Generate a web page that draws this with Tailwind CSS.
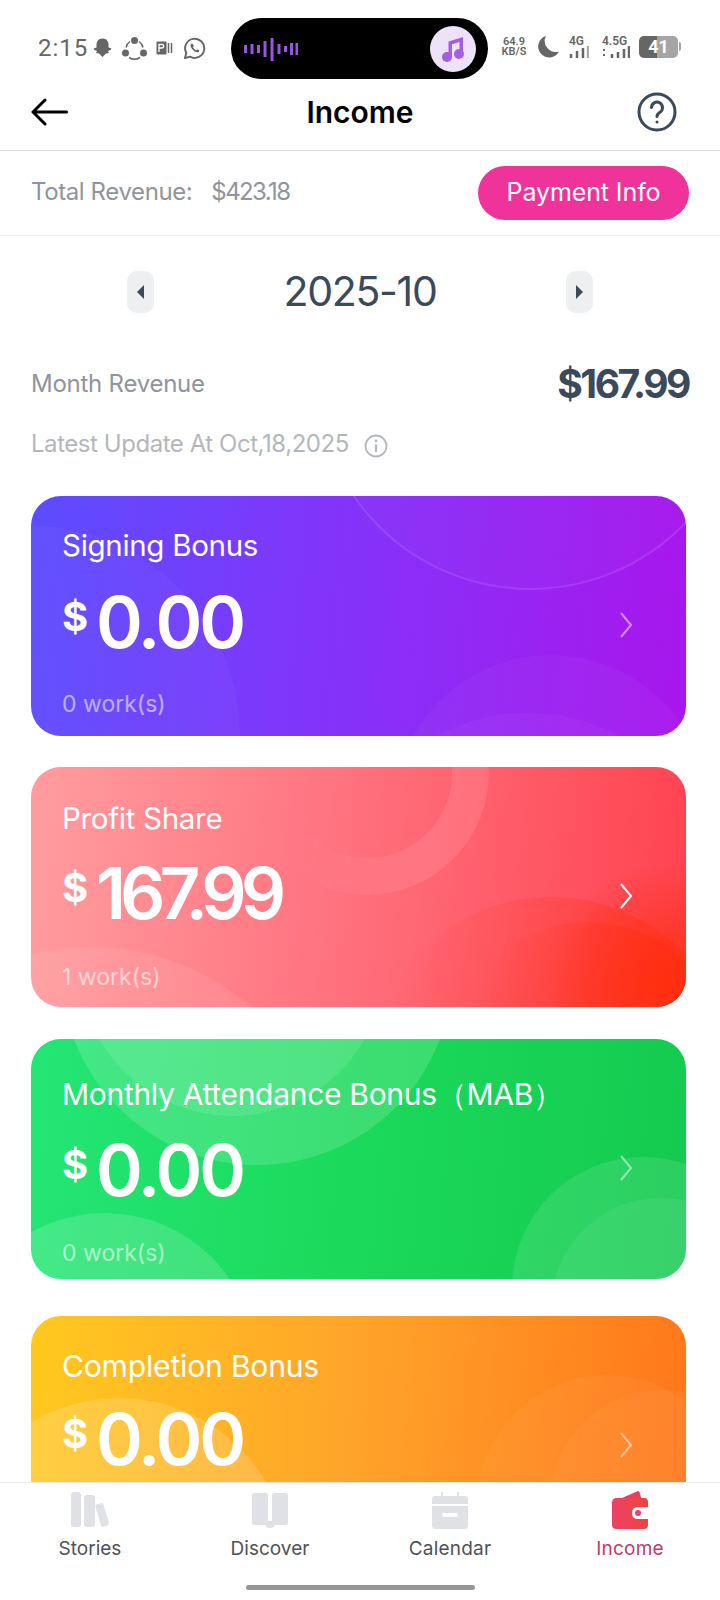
<!DOCTYPE html>
<html lang="en">
  <head>
    <meta charset="UTF-8" />
    <meta name="viewport" content="width=device-width, initial-scale=1.0" />
    <title>Income</title>
    <script src="https://cdn.jsdelivr.net/npm/@tailwindcss/browser@4"></script>
  </head>
  <body class="bg-white font-['Inter',sans-serif]">
    <div class="flex flex-col w-[720px] h-[1600px] overflow-hidden bg-white">
      <!-- status bar -->
      <div class="flex items-center h-[85px] shrink-0 pt-[11px] pl-[38px]">
        <span class="w-[52px] text-[24px] tracking-[1px] text-[#666] font-['Roboto',sans-serif]">2:15</span>
        <div class="flex items-center w-[141px] gap-[5px]">
          <svg width="25" height="23" viewBox="0 0 25 22" fill="#666"><path d="M12.500 1c4 0 6 3 6 6v3l3 1-1 1.500-2.500 1 1 2-3 .5-3.500 3.500-3.500-3.500-3-.5 1-2-2.500-1L3.500 11l3-1V7c0-3 2-6 6-6z"/></svg>
          <svg width="25" height="25" viewBox="0 0 25 25" fill="none" class="ml-[2px]"><path d="M8 5.500a9.500 9.500 0 0 0-4 6M17 5.500a9.500 9.500 0 0 1 4 6M7 21.500a10 10 0 0 0 11 0" stroke="#666" stroke-width="1.500"/><circle cx="12.500" cy="4.500" r="3.500" fill="#666"/><circle cx="3.500" cy="17" r="3.500" fill="#666"/><circle cx="21.500" cy="17" r="3.500" fill="#666"/></svg>
          <svg width="17" height="14" viewBox="0 0 17 14" fill="none" class="ml-[4px]"><rect x="0.500" y="0.500" width="10" height="13" rx="1" fill="#666"/><path d="M3 11V3.500h3a1.700 1.700 0 0 1 0 3.500H3" stroke="#fff" stroke-width="1.300"/><path d="M12.500 2v10M15.500 2v10" stroke="#666" stroke-width="1.500"/></svg>
          <svg width="23" height="23" viewBox="0 0 24 24" fill="none" class="ml-[5px]"><path d="M2 22l1.500-5.300A10 10 0 1 1 7.300 20.500z" stroke="#666" stroke-width="2" stroke-linejoin="round"/><path d="M8.500 7c-1 1-1 3 .8 5.300 1.800 2.400 4 3.700 5.700 3.700 1 0 2-.8 2-2l-2.300-1.200-1 1c-1.300-.5-2.700-1.800-3.300-3.300l1-1L10 7z" fill="#666"/></svg>
        </div>
        <div class="flex items-center justify-between w-[257px] h-[61px] mt-[1px] rounded-full bg-black pl-[13px] pr-[12px]">
          <svg width="54" height="24" viewBox="0 0 54 24" fill="none" stroke="#9a55e0" stroke-width="3"><path d="M1.500 8v8M8 7v10M14.500 8v8M21 4v16M28 1v23M35 7v10M41.500 9v6M47.500 6v12M53 6v12"/></svg>
          <div class="flex items-center justify-center w-[46px] h-[46px] rounded-full bg-[#eee2fa]">
            <svg width="24" height="26" viewBox="0 0 24 26" fill="#a45ee0"><path d="M7.500 5.500L22 1v17h-3.500V6l-7.500 2.300V21H7.500z"/><circle cx="6" cy="21" r="5"/><circle cx="18" cy="18" r="5"/></svg>
          </div>
        </div>
        <div class="flex flex-col items-center ml-[13px] w-[26px] -mt-[3px] text-[11px] leading-[10px] font-semibold text-[#666] font-['Roboto',sans-serif]"><span>64.9</span><span>KB/S</span></div>
        <svg width="22" height="23" viewBox="0 0 22 23" fill="#666" class="ml-[10px] -mt-[3px]"><path d="M9 1a11 11 0 0 0 13 15.500A11 11 0 1 1 9 1z"/></svg>
        <div class="flex flex-col ml-[10px] w-[22px] -mt-[3px] text-[12px] leading-[10px] font-semibold text-[#666] font-['Roboto',sans-serif]">
          <span>4G</span>
          <svg width="20" height="12" viewBox="0 0 20 12" fill="none" stroke="#666" stroke-width="2.500"><path d="M2 12V8M8 12V5M14 12V2"/><path d="M19 12V0" stroke="#aaa"/></svg>
        </div>
        <div class="flex flex-col ml-[11px] w-[29px] -mt-[3px] text-[12px] leading-[10px] font-semibold text-[#666] font-['Roboto',sans-serif]">
          <span>4.5G</span>
          <svg width="28" height="12" viewBox="0 0 28 12" fill="none" stroke="#666" stroke-width="2.500"><path d="M2 3v2M2 8v2" stroke-width="2"/><path d="M10 12V8M16 12V6M22 12V3M27 12V0"/></svg>
        </div>
        <div class="flex items-center ml-[8px] -mt-[3px]">
          <div class="flex items-center justify-center w-[39px] h-[22px] rounded-[5px] bg-[linear-gradient(90deg,#666_0%,#666_45%,#a5a5a5_45%,#a5a5a5_100%)] text-[18px] font-bold text-white font-['Roboto',sans-serif]">41</div>
          <div class="w-[2px] h-[9px] ml-[1px] rounded-r-full bg-[#a5a5a5]"></div>
        </div>
      </div>

      <!-- header -->
      <div class="grid grid-cols-[1fr_auto_1fr] items-center h-[66px] shrink-0 border-b border-[#d9dbde] pb-[11px] px-[31px]">
        <svg width="37" height="28" viewBox="0 0 37 28" fill="none" stroke="#000" stroke-width="3" stroke-linecap="round" stroke-linejoin="round"><path d="M35.500 14H2M14 2L2 14l12 12"/></svg>
        <h1 class="text-[30px] font-semibold text-black">Income</h1>
        <svg width="40" height="40" viewBox="0 0 40 40" fill="none" stroke="#3b4a5a" stroke-width="3" stroke-linecap="round" class="justify-self-end mr-[12px]"><circle cx="20" cy="20" r="18"/><path d="M14.500 15.500a5.500 5.500 0 1 1 8.500 4.700c-2 1.300-3 2.200-3 4.300"/><circle cx="20" cy="30" r="1.500" fill="#3b4a5a" stroke="none"/></svg>
      </div>

      <!-- total revenue -->
      <div class="flex items-center justify-between h-[85px] shrink-0 border-b border-[#ececee] pl-[31px] pr-[31px]">
        <div class="flex items-center text-[24px] text-[#8f959d] tracking-[-0.4px] -mt-[2px]">
          <span>Total Revenue:</span>
          <span class="ml-[19px] tracking-[-1.6px]">$423.18</span>
        </div>
        <button class="w-[211px] h-[54px] rounded-full bg-[#f0339a] text-[25px] text-white tracking-[-0.1px]">Payment Info</button>
      </div>

      <div class="flex-1 overflow-hidden">
        <!-- month switcher -->
        <div class="flex items-center justify-between h-[112px] pl-[127px] pr-[127px]">
          <div class="flex items-center justify-center w-[27px] h-[42px] rounded-[10px] bg-[#eeeff1]">
            <div class="w-0 h-0 border-y-[7px] border-y-transparent border-r-[7px] border-r-[#3b4a5a]"></div>
          </div>
          <span class="text-[41px] text-[#3b4a5a] tracking-[-1.3px]">2025-10</span>
          <div class="flex items-center justify-center w-[27px] h-[42px] rounded-[10px] bg-[#eeeff1]">
            <div class="w-0 h-0 border-y-[7px] border-y-transparent border-l-[7px] border-l-[#3b4a5a]"></div>
          </div>
        </div>

        <div class="flex items-center justify-between h-[48px] mt-[12px] px-[31px]">
          <span class="text-[24px] text-[#8f959d] tracking-[-0.25px]">Month Revenue</span>
          <span class="text-[39px] font-bold text-[#3b4a5a] tracking-[-2.4px]">$167.99</span>
        </div>
        <div class="flex items-center h-[36px] mt-[18px] pl-[31px]">
          <span class="text-[24px] text-[#b3b7bc] tracking-[-0.45px]">Latest Update At Oct,18,2025</span>
          <svg width="24" height="24" viewBox="0 0 24 24" fill="none" stroke="#b3b7bc" stroke-width="1.800" class="ml-[15px] mt-[3px]"><circle cx="12" cy="12" r="10.500"/><path d="M12 10.500V18" stroke-width="2.200"/><circle cx="12" cy="7" r="1.400" fill="#b3b7bc" stroke="none"/></svg>
        </div>

        <!-- signing bonus -->
        <div class="relative overflow-hidden w-[655px] h-[240px] mt-[34px] ml-[31px] rounded-[30px] bg-[linear-gradient(95deg,#5b4dff_0%,#7f37fb_40%,#a916ec_100%)]">
          <div class="absolute left-[-211px] top-[30px] w-[420px] h-[420px] rounded-full bg-white/[0.03]"></div>
          <div class="absolute left-[284px] top-[-337px] w-[431px] h-[431px] rounded-full bg-white/[0.02] border-2 border-white/10"></div>
          <div class="absolute left-[362px] top-[159px] w-[316px] h-[316px] rounded-full bg-white/[0.03]"></div>
          <div class="absolute left-[302px] top-[217px] w-[390px] h-[390px] rounded-full bg-white/[0.03]"></div>
          <div class="relative flex flex-col h-full pl-[31px]">
            <span class="mt-[30px] h-[38px] text-[29.5px] leading-[38px] text-white tracking-[-0.3px]">Signing Bonus</span>
            <div class="flex items-center h-[84px] mt-[16px]">
              <span class="text-[40px] font-bold text-white -mt-[10px] w-[34px]">$</span>
              <span class="text-[71px] leading-[84px] font-semibold text-white tracking-[-3px]">0.00</span>
            </div>
            <span class="mt-[25px] text-[23px] leading-[30px] text-white/55">0 work(s)</span>
            <svg width="14" height="26" viewBox="0 0 14 26" fill="none" stroke="#fff" stroke-opacity=".5" stroke-width="2" class="absolute left-[588px] top-[116px]"><path d="M2 1l10 12L2 25"/></svg>
          </div>
        </div>

        <!-- profit share -->
        <div class="relative overflow-hidden w-[655px] h-[240px] mt-[31px] ml-[31px] rounded-[30px] bg-[linear-gradient(95deg,#ff9da0_0%,#ff7480_45%,#ff4250_100%)]">
          <div class="absolute left-[-183px] top-[180px] w-[486px] h-[486px] rounded-full bg-white/[0.08]"></div>
          <div class="absolute left-[214px] top-[-116px] w-[244px] h-[244px] rounded-full border-[37px] border-white/10 [mask-image:linear-gradient(100deg,transparent_30%,black_75%)]"></div>
          <div class="absolute left-[334px] top-[130px] w-[372px] h-[372px] rounded-full bg-[linear-gradient(110deg,transparent_12%,rgba(255,50,30,0.5)_65%)]"></div>
          <div class="absolute left-[417px] top-[155px] w-[280px] h-[280px] rounded-full bg-[linear-gradient(110deg,transparent_15%,rgba(255,45,20,0.55)_70%)]"></div>
          <div class="absolute left-[520px] top-[95px] w-[240px] h-[240px] bg-[radial-gradient(circle_closest-side,rgba(255,45,10,0.85),transparent)]"></div>
          <div class="relative flex flex-col h-full pl-[31px]">
            <span class="mt-[32px] h-[38px] text-[29.5px] leading-[38px] text-white tracking-[-0.3px]">Profit Share</span>
            <div class="flex items-center h-[84px] mt-[14px]">
              <span class="text-[40px] font-bold text-white -mt-[10px] w-[34px]">$</span>
              <span class="text-[71px] leading-[84px] font-semibold text-white tracking-[-6px]">167.99</span>
            </div>
            <span class="mt-[27px] text-[23px] leading-[30px] text-white/55">1 work(s)</span>
            <svg width="14" height="26" viewBox="0 0 14 26" fill="none" stroke="#fff" stroke-width="2" class="absolute left-[588px] top-[116px]"><path d="M2 1l10 12L2 25"/></svg>
          </div>
        </div>

        <!-- monthly attendance bonus -->
        <div class="relative overflow-hidden w-[655px] h-[240px] mt-[32px] ml-[31px] rounded-[30px] bg-[linear-gradient(95deg,#24e676_0%,#1bd95a_50%,#14ca50_100%)]">
          <div class="absolute left-[30px] top-[-266px] w-[392px] h-[392px] rounded-full bg-white/15"></div>
          <div class="absolute left-[48px] top-[-229px] w-[306px] h-[306px] rounded-full bg-white/10"></div>
          <div class="absolute left-[-77px] top-[174px] w-[302px] h-[302px] rounded-full bg-white/15"></div>
          <div class="absolute left-[481px] top-[118px] w-[262px] h-[262px] rounded-full bg-white/10"></div>
          <div class="absolute left-[520px] top-[159px] w-[220px] h-[220px] rounded-full bg-white/[0.06]"></div>
          <div class="relative flex flex-col h-full pl-[31px]">
            <span class="mt-[36px] h-[38px] text-[30px] leading-[38px] text-white tracking-[-0.3px] whitespace-nowrap">Monthly Attendance Bonus（MAB）</span>
            <div class="flex items-center h-[84px] mt-[15px]">
              <span class="text-[40px] font-bold text-white -mt-[10px] w-[34px]">$</span>
              <span class="text-[71px] leading-[84px] font-semibold text-white tracking-[-3px]">0.00</span>
            </div>
            <span class="mt-[26px] text-[23px] leading-[30px] text-white/55">0 work(s)</span>
            <svg width="14" height="26" viewBox="0 0 14 26" fill="none" stroke="#fff" stroke-opacity=".5" stroke-width="2" class="absolute left-[588px] top-[116px]"><path d="M2 1l10 12L2 25"/></svg>
          </div>
        </div>

        <!-- completion bonus -->
        <div class="relative overflow-hidden w-[655px] h-[240px] mt-[37px] ml-[31px] rounded-[30px] bg-[linear-gradient(95deg,#ffc91f_0%,#ffa32a_50%,#ff761a_100%)]">
          <div class="absolute left-[-83px] top-[82px] w-[342px] h-[342px] rounded-full bg-white/15"></div>
          <div class="absolute left-[446px] top-[59px] w-[260px] h-[260px] rounded-full bg-white/[0.04]"></div>
          <div class="absolute left-[520px] top-[74px] w-[220px] h-[220px] rounded-full bg-white/[0.04]"></div>
          <div class="relative flex flex-col h-full pl-[31px]">
            <span class="mt-[31px] h-[38px] text-[30px] leading-[38px] text-white tracking-[-0.15px]">Completion Bonus</span>
            <div class="flex items-center h-[84px] mt-[12px]">
              <span class="text-[40px] font-bold text-white -mt-[10px] w-[34px]">$</span>
              <span class="text-[71px] leading-[84px] font-semibold text-white tracking-[-3px]">0.00</span>
            </div>
            <svg width="14" height="26" viewBox="0 0 14 26" fill="none" stroke="#fff" stroke-opacity=".5" stroke-width="2" class="absolute left-[588px] top-[116px]"><path d="M2 1l10 12L2 25"/></svg>
          </div>
        </div>
      </div>

      <!-- bottom nav -->
      <div class="shrink-0 h-[118px] border-t border-[#e9eaec] bg-white">
        <div class="grid grid-cols-4 h-[85px]">
          <div class="flex flex-col items-center pt-[9px]">
            <svg width="38" height="36" viewBox="0 0 38 36" fill="#e0e1e7"><rect x="0" y="0" width="10" height="35" rx="3"/><rect x="13" y="3" width="11" height="32" rx="3"/><path d="M25.500 12.500l5-1.500q1.500 0 2 1.500l5.300 18q.2 2-1.300 2.800l-4 1.500q-2 .3-2.500-1.500l-5.500-18.500q-.3-1.800 1-2.300z"/></svg>
            <span class="mt-[9px] text-[19px] leading-[24px] text-[#4d5259]">Stories</span>
          </div>
          <div class="flex flex-col items-center pt-[9px]">
            <svg width="38" height="36" viewBox="0 0 38 36" fill="#e0e1e7"><path d="M3 1h12q2 0 2 2v26h4V3q0-2 2-2h12q2 0 2 2v28q0 2-2 2H24q-1 3-5 3t-5-3H3q-2 0-2-2V3q0-2 2-2z"/></svg>
            <span class="mt-[9px] text-[19px] leading-[24px] text-[#4d5259]">Discover</span>
          </div>
          <div class="flex flex-col items-center pt-[9px]">
            <svg width="38" height="37" viewBox="0 0 38 37" fill="#e0e1e7"><path d="M10 0h2v4h14V0h2v4h6q3 0 3 3v5H1V7q0-3 3-3h6z"/><path d="M1 14h36v19q0 4-4 4H5q-4 0-4-4zM13 21q-2 0-2 2t2 2h12q2 0 2-2t-2-2z" fill-rule="evenodd"/></svg>
            <span class="mt-[8px] text-[19px] leading-[24px] tracking-[0.2px] text-[#4d5259]">Calendar</span>
          </div>
          <div class="flex flex-col items-center pt-[8px]">
            <svg width="38" height="38" viewBox="0 0 38 38"><defs><linearGradient id="wallet" x1="0" x2="1" y1="0" y2="0"><stop offset="0" stop-color="#ee4068"/><stop offset="1" stop-color="#f0453c"/></linearGradient></defs><path d="M11 7L27 0q2 0 3 7z" fill="#e6405a"/><path d="M6 7h27q4 0 4 4v5H27q-6 0-6 6t6 6h10v6q0 4-4 4H6q-5 0-5-4V12q0-5 5-5z" fill="url(#wallet)"/><circle cx="27" cy="22" r="3" fill="#ee4060"/></svg>
            <span class="mt-[8px] text-[19px] leading-[24px] tracking-[0.2px] text-[#c03a6e]">Income</span>
          </div>
        </div>
        <div class="w-[229px] h-[5px] mt-[17px] mx-auto rounded-full bg-[#969696]"></div>
      </div>
    </div>
  </body>
</html>
